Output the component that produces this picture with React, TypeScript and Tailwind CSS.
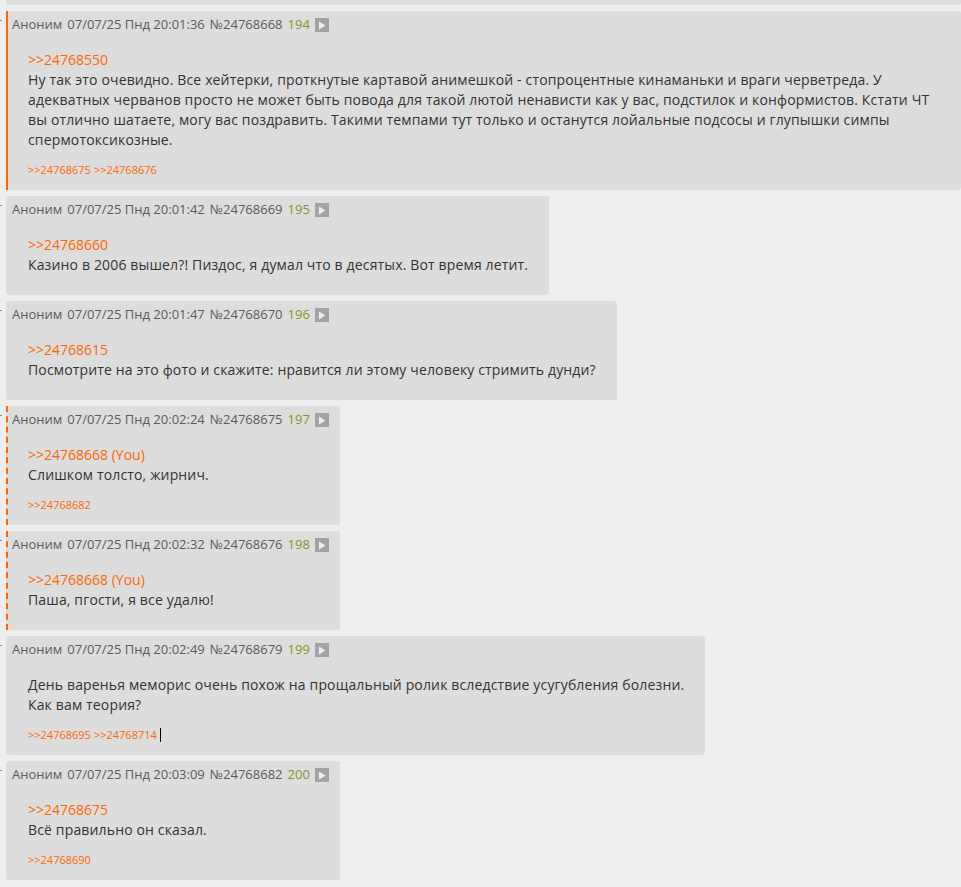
import React from "react";

type Post = {
  num: number;
  id: string;
  time: string;
  reply?: string;
  text: string[];
  replies?: string[];
  kind?: "hl" | "mine";
  caret?: boolean;
  full?: boolean;
};

const posts: Post[] = [
  {
    num: 194,
    id: "24768668",
    time: "20:01:36",
    reply: ">>24768550",
    text: [
      "Ну так это очевидно. Все хейтерки, проткнутые картавой анимешкой - стопроцентные кинаманьки и враги черветреда. У адекватных черванов просто не может быть повода для такой лютой ненависти как у вас, подстилок и конформистов. Кстати ЧТ вы отлично шатаете, могу вас поздравить. Такими темпами тут только и останутся лойальные подсосы и глупышки симпы спермотоксикозные.",
    ],
    replies: [">>24768675", ">>24768676"],
    kind: "hl",
    full: true,
  },
  {
    num: 195,
    id: "24768669",
    time: "20:01:42",
    reply: ">>24768660",
    text: ["Казино в 2006 вышел?! Пиздос, я думал что в десятых. Вот время летит."],
  },
  {
    num: 196,
    id: "24768670",
    time: "20:01:47",
    reply: ">>24768615",
    text: ["Посмотрите на это фото и скажите: нравится ли этому человеку стримить дунди?"],
  },
  {
    num: 197,
    id: "24768675",
    time: "20:02:24",
    reply: ">>24768668 (You)",
    text: ["Слишком толсто, жирнич."],
    replies: [">>24768682"],
    kind: "mine",
  },
  {
    num: 198,
    id: "24768676",
    time: "20:02:32",
    reply: ">>24768668 (You)",
    text: ["Паша, пгости, я все удалю!"],
    kind: "mine",
  },
  {
    num: 199,
    id: "24768679",
    time: "20:02:49",
    text: [
      "День варенья меморис очень похож на прощальный ролик вследствие усугубления болезни.",
      "Как вам теория?",
    ],
    replies: [">>24768695", ">>24768714"],
    caret: true,
  },
  {
    num: 200,
    id: "24768682",
    time: "20:03:09",
    reply: ">>24768675",
    text: ["Всё правильно он сказал."],
    replies: [">>24768690"],
  },
];

function PlayIcon() {
  return (
    <span className="inline-flex w-[14px] h-[14px] bg-[#a3a3a3] items-center justify-center ml-[5px]">
      <svg width="8" height="9" viewBox="0 0 8 9">
        <path d="M1 0.5 L7.5 4.5 L1 8.5 Z" fill="#eeeeee" />
      </svg>
    </span>
  );
}

function PostCard({ p }: { p: Post }) {
  const border =
    p.kind === "hl"
      ? "border-l-2 border-solid border-[#ff6600] rounded-l-none"
      : p.kind === "mine"
      ? "border-l-2 border-dashed border-[#ff6600] rounded-l-none"
      : "border-l-2 border-transparent";
  return (
    <div className="flex items-start">
      <div className="w-[2px] h-[1px] mt-[9px] bg-[#888] shrink-0" />
      <div
        className={`ml-[4px] bg-[#dddddd] rounded-[3px] pl-[4px] pr-[11px] pt-[4px] ${border} ${
          p.full ? "flex-1" : "w-fit"
        } ${p.replies ? "pb-[12px]" : "pb-[20px]"}`}
      >
        <div className="flex items-center h-[20px] text-[13px] text-[#5a5a5a] whitespace-nowrap">
          <span>Аноним</span>
          <span className="ml-[5px]">07/07/25 Пнд {p.time}</span>
          <span className="ml-[5px]">№{p.id}</span>
          <span className="ml-[5px] text-[#789a1f]">{p.num}</span>
          <PlayIcon />
        </div>
        <div className="ml-[16px] mr-[10px] mt-[15px] text-[14px] leading-[20px] tracking-[0.15px] text-[#333333]">
          {p.reply && <div className="text-[#ff6600] text-[14px] tracking-normal">{p.reply}</div>}
          {p.text.map((t, i) => (
            <div key={i}>{t}</div>
          ))}
        </div>
        {p.replies && (
          <div className="ml-[16px] mt-[12px] text-[11px] leading-[16px] text-[#ff6600] flex items-center">
            {p.replies.map((r, i) => (
              <span key={i} className="mr-[3px]">
                {r}
              </span>
            ))}
            {p.caret && <span className="inline-block w-[1px] h-[14px] bg-black" />}
          </div>
        )}
      </div>
    </div>
  );
}

export default function App() {
  return (
    <div
      className="min-h-[887px] bg-[#eeeeee] flex flex-col gap-[6px] overflow-hidden"
      style={{ fontFamily: '"Open Sans", "Noto Sans", sans-serif' }}
    >
      <div className="ml-[6px] h-[5px] bg-[#dddddd] rounded-b-[3px]" />
      {posts.map((p) => (
        <PostCard key={p.id} p={p} />
      ))}
    </div>
  );
}
